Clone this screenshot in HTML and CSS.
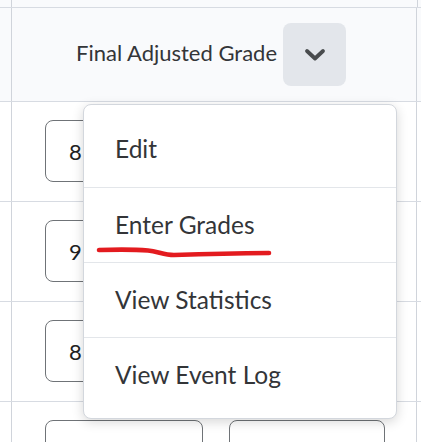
FILE: index.html
```html
<!DOCTYPE html>
<html lang="en">
<head>
<meta charset="utf-8">
<title>Final Adjusted Grade</title>
<link rel="stylesheet" href="styles.css">
</head>
<body>
<div class="table">
  <div class="row row-top">
    <div class="cell side"></div>
    <div class="cell main"></div>
    <div class="cell edge"></div>
  </div>
  <div class="row row-head">
    <div class="cell side"></div>
    <div class="cell main head-main">
      <span class="head-title">Final Adjusted Grade</span>
      <button class="head-btn" type="button" aria-label="Actions">
        <svg width="22" height="14" viewBox="0 0 22 14"><path d="M3 3 L11 10.5 L19 3" fill="none" stroke="#494c4e" stroke-width="3.8" stroke-linecap="round" stroke-linejoin="round"/></svg>
      </button>
    </div>
    <div class="cell edge"></div>
  </div>
  <div class="row row-body">
    <div class="cell side"></div>
    <div class="cell main body-main"><div class="box">8</div></div>
    <div class="cell edge"></div>
  </div>
  <div class="row row-body">
    <div class="cell side"></div>
    <div class="cell main body-main"><div class="box">9</div></div>
    <div class="cell edge"></div>
  </div>
  <div class="row row-body">
    <div class="cell side"></div>
    <div class="cell main body-main"><div class="box">8</div></div>
    <div class="cell edge"></div>
  </div>
  <div class="row row-body">
    <div class="cell side"></div>
    <div class="cell main body-main">
      <div class="box box-ph">Hidden</div>
      <span class="slash">/</span>
      <div class="box box-ph box-b">Hidden</div>
    </div>
    <div class="cell edge"></div>
  </div>
</div>

<div class="menu">
  <div class="menu-item">Edit</div>
  <div class="menu-item">Enter Grades</div>
  <div class="menu-item">View Statistics</div>
  <div class="menu-item">View Event Log</div>
</div>

<svg class="scribble" width="180" height="16" viewBox="0 0 180 16">
  <path d="M3 5 C 20 4.5, 40 4.5, 52 5.5 C 62 6.5, 68 10, 78 10 C 95 9.5, 130 8.5, 173 8" fill="none" stroke="#e31b1f" stroke-width="4.6" stroke-linecap="round"/>
</svg>
</body>
</html>
```

FILE: styles.css
```css
html, body {
  margin: 0;
  padding: 0;
  background: #ffffff;
  font-family: Lato, "Noto Sans", sans-serif;
  color: #202122;
  overflow: hidden;
}

.table {
  display: flex;
  flex-direction: column;
  width: 421px;
}

.row {
  display: flex;
  border-bottom: 1px solid #d7dbe2;
}

.cell.side {
  width: 11px;
  flex: none;
  border-right: 1px solid #d0d4db;
}

.cell.main {
  width: 405px;
  flex: none;
  border-right: 1px solid #d0d4db;
}

.cell.edge {
  flex: 1;
}

.row-top {
  height: 7px;
  background: #f9fafc;
}

.row-head {
  height: 93px;
  background: #f9fafc;
}

.head-main {
  display: flex;
  align-items: center;
  padding-left: 64px;
  box-sizing: border-box;
}

.head-title {
  font-size: 22px;
  line-height: 1;
  margin-top: -4px;
  color: #333538;
}

.head-btn {
  width: 63px;
  height: 63px;
  margin-left: 6px;
  border: none;
  border-radius: 8px;
  background: #e3e6eb;
  display: flex;
  align-items: center;
  justify-content: center;
  padding: 0;
}

.row-body {
  height: 99px;
  background: #ffffff;
}

.body-main {
  display: flex;
  align-items: flex-start;
  padding: 18px 0 0 33px;
  box-sizing: border-box;
}

.box {
  width: 158px;
  height: 62px;
  box-sizing: border-box;
  border: 1px solid #6f7377;
  border-radius: 8px;
  display: flex;
  align-items: center;
  padding-left: 23px;
  font-size: 22px;
  color: #202122;
  background: #ffffff;
}

.box-ph {
  color: #b8bcc2;
}

.box-b {
  width: 156px;
}

.slash {
  width: 26px;
  text-align: center;
  font-size: 22px;
  line-height: 62px;
  color: #494c4e;
}

.menu {
  position: absolute;
  left: 83px;
  top: 104px;
  width: 314px;
  box-sizing: border-box;
  padding: 7px 0 6px;
  background: #ffffff;
  border: 1px solid #d3d7dd;
  border-radius: 8px;
  box-shadow: 0 3px 12px rgba(0, 0, 0, 0.16);
}

.menu-item {
  height: 75px;
  box-sizing: border-box;
  display: flex;
  align-items: center;
  padding-left: 31px;
  padding-bottom: 2px;
  font-size: 24.5px;
  color: #333538;
}

.menu-item + .menu-item {
  border-top: 1px solid #e3e6ea;
}

.scribble {
  position: absolute;
  left: 96px;
  top: 245px;
}
```
